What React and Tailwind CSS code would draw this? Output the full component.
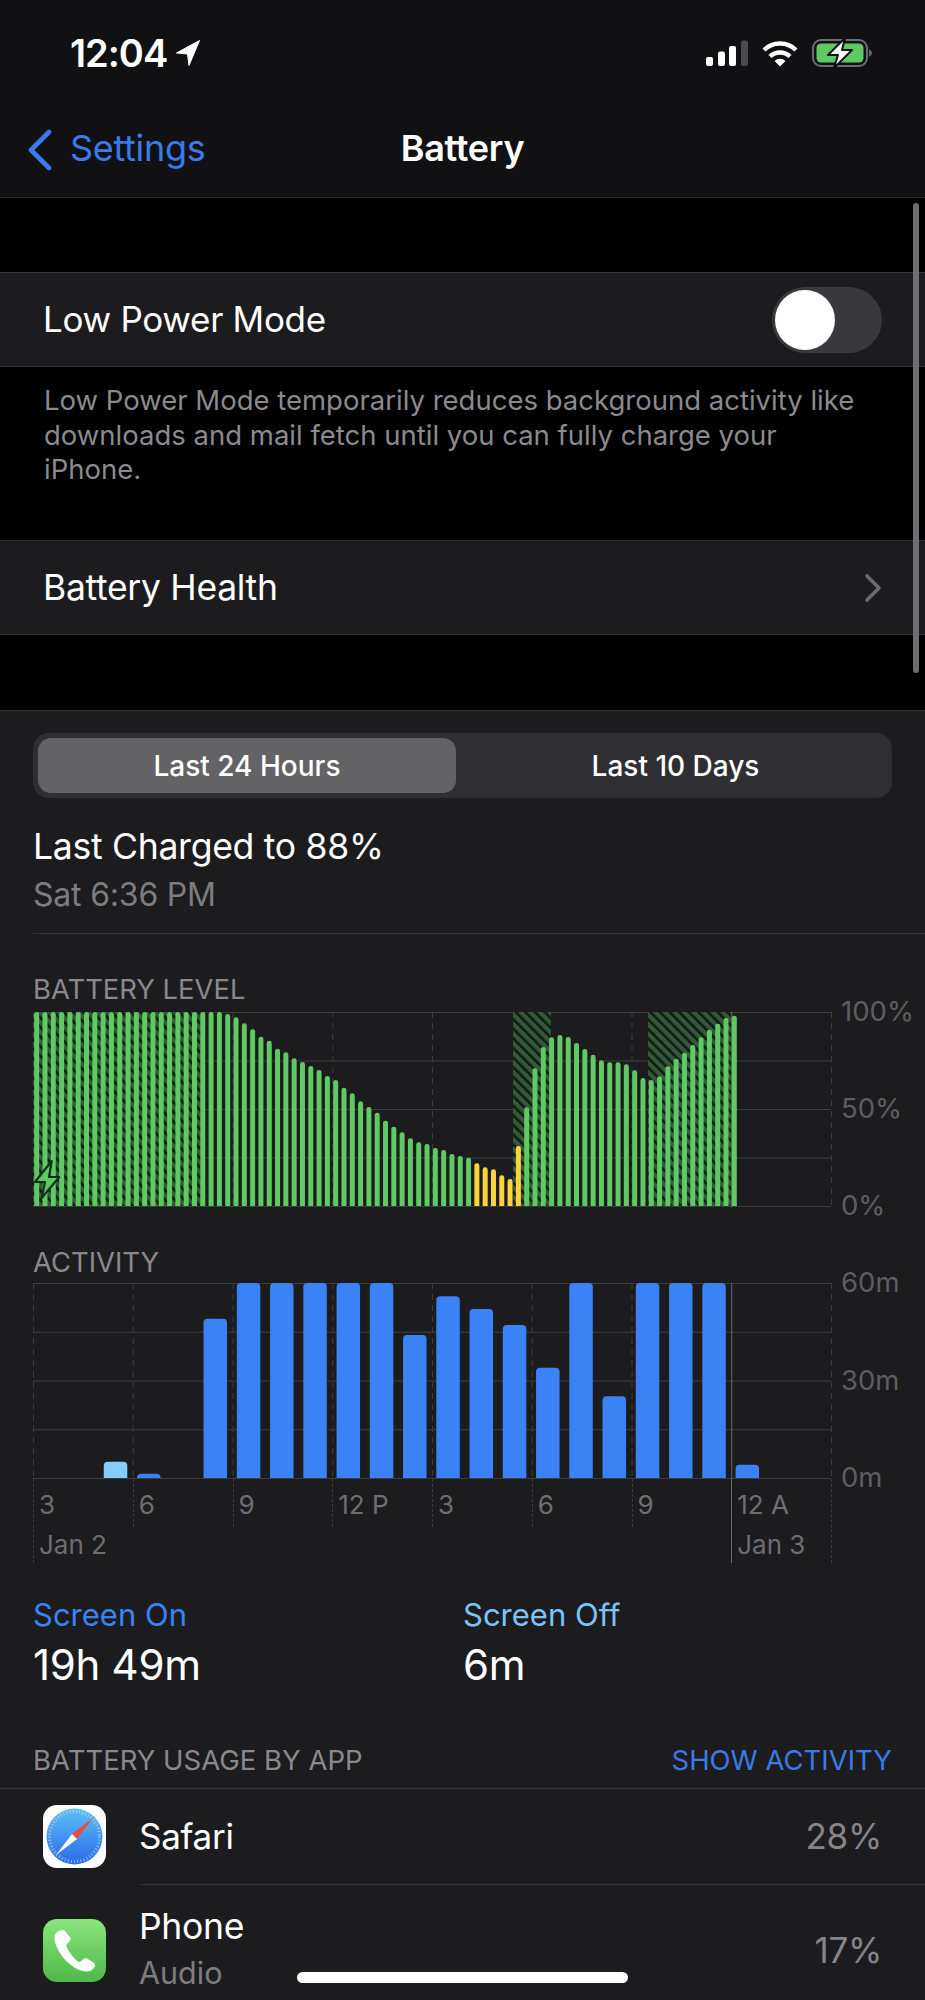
import React from "react";

const LEVEL_TOPS = [
  36, 36, 36, 36, 36, 36, 36, 36, 36, 36, 36, 36, 36, 36, 36, 36, 36, 36, 36, 36, 36, 36, 36,
  42, 52, 70, 88, 110, 122, 146, 157, 175, 186, 198, 210, 228, 240, 263, 280, 304, 321, 338,
  362, 380, 397, 415, 427, 432, 444, 450, 462, 468, 473, 490, 502, 508, 526, 537, 438, 322,
  205, 141, 112, 105, 111, 129, 147, 164, 181, 187, 187, 193, 211, 234, 240, 229, 199, 176,
  158, 135, 112, 89, 71, 54, 47,
];

const ACTIVITY = [
  { slot: 2, top: 726, light: true },
  { slot: 3, top: 762 },
  { slot: 5, top: 297 },
  { slot: 6, top: 190 },
  { slot: 7, top: 190 },
  { slot: 8, top: 190 },
  { slot: 9, top: 190 },
  { slot: 10, top: 190 },
  { slot: 11, top: 346 },
  { slot: 12, top: 230 },
  { slot: 13, top: 268 },
  { slot: 14, top: 316 },
  { slot: 15, top: 444 },
  { slot: 16, top: 190 },
  { slot: 17, top: 530 },
  { slot: 18, top: 190 },
  { slot: 19, top: 190 },
  { slot: 20, top: 190 },
  { slot: 21, top: 735 },
];

const COL = 99.75;
const VERTICALS = [0, 1, 2, 3, 4, 5, 6, 7, 8];

function roundTopBar(x, top, w, bottom, r) {
  return `M${x} ${bottom}V${top + r}Q${x} ${top} ${x + r} ${top}H${x + w - r}Q${x + w} ${top} ${x + w} ${top + r}V${bottom}Z`;
}

const Grid = ({ height }) => (
  <>
    {[0, 0.25, 0.5, 0.75, 1].map((f) => (
      <line key={f} x1="0" x2="798" y1={0.5 + f * (height - 1)} y2={0.5 + f * (height - 1)} stroke="#3c3c3f" strokeWidth="1" />
    ))}
    {VERTICALS.map((v) => (
      <line
        key={v}
        x1={v * COL + 0.5}
        x2={v * COL + 0.5}
        y1="0"
        y2={height}
        stroke={v === 7 ? "#6a6a6e" : "#3c3c3f"}
        strokeWidth="1"
        strokeDasharray={v === 7 ? undefined : "6 5"}
      />
    ))}
  </>
);

const BatteryChart = () => (
  <svg width="800" height="195" viewBox="0 0 800 195" className="block">
    <defs>
      <pattern id="hatch" width="6.8" height="6.8" patternUnits="userSpaceOnUse" patternTransform="rotate(-45)">
        <rect width="6.8" height="6.8" fill="#33593a" />
        <rect width="2.6" height="6.8" fill="#101c12" />
      </pattern>
      <clipPath id="plot">
        <rect x="0" y="0" width="800" height="194" />
      </clipPath>
    </defs>
    <Grid height={195} />
    <rect x="0" y="0" width="172" height="194" fill="url(#hatch)" />
    <rect x="480" y="0" width="38" height="194" fill="url(#hatch)" />
    <rect x="615" y="0" width="83" height="194" fill="url(#hatch)" />
    <g clipPath="url(#plot)">
      {LEVEL_TOPS.map((t, i) => {
        const x = 3.7 + 8.305 * i - 2.5;
        const top = (t - 36) / 3;
        const yellow = i >= 53 && i <= 58;
        return <path key={i} d={roundTopBar(x, top, 5, 194, 2.4)} fill={yellow ? "#fbd33f" : "#5fc963"} />;
      })}
    </g>
    <path d="M18.7 149 L2 170 L12 170 L8.7 186 L26.3 165 L16 165 Z" fill="#5fc963" stroke="#12301a" strokeWidth="2.2" strokeLinejoin="round" />
  </svg>
);

const ActivityChart = () => (
  <svg width="800" height="196" viewBox="0 0 800 196" className="block">
    <Grid height={196} />
    {ACTIVITY.map((b) => {
      const x = 4.3 + 33.25 * b.slot + 0;
      const top = (b.top - 190) / 3;
      return <path key={b.slot} d={roundTopBar(x, top, 23.5, 195, 4)} fill={b.light ? "#84cdfc" : "#3b82f6"} />;
    })}
  </svg>
);

const AXIS = [
  { label: "3", date: "Jan 2", tall: true },
  { label: "6" },
  { label: "9" },
  { label: "12 P" },
  { label: "3" },
  { label: "6" },
  { label: "9" },
  { label: "12 A", date: "Jan 3", tall: true, solid: true },
];

const AxisLabels = () => (
  <div className="flex w-[799px] h-[84px] border-r border-dashed border-[#3c3c3f] text-[26px] text-[#6e6e72]">
    {AXIS.map((a, i) => (
      <div key={i} className="relative w-[99.75px] h-[84px] pl-[6px]">
        <div
          className={
            a.solid
              ? "absolute left-0 top-0 h-[84px] border-l border-[#6a6a6e]"
              : a.tall
                ? "absolute left-0 top-0 h-[84px] border-l border-dashed border-[#3c3c3f]"
                : "absolute left-0 top-0 h-[48px] border-l border-dashed border-[#3c3c3f]"
          }
        />
        <div className="h-[52px] leading-[52px]">{a.label}</div>
        {a.date && <div className="h-[32px] leading-[28px]">{a.date}</div>}
      </div>
    ))}
  </div>
);

const AxisValues = ({ values, height }) => (
  <div className="flex flex-col justify-between text-[27.5px] text-[#5e5e62] ml-[8px]" style={{ height }}>
    {values.map((v) => (
      <div key={v} className="h-0 flex items-center">
        {v}
      </div>
    ))}
  </div>
);

const StatusIcons = () => (
  <div className="flex items-center gap-[14px]">
    <svg width="42" height="27" viewBox="0 0 42 27">
      <rect x="0" y="17" width="7" height="9" rx="2" fill="#fff" />
      <rect x="12" y="11.5" width="7" height="14.5" rx="2" fill="#fff" />
      <rect x="23" y="6" width="7" height="20" rx="2" fill="#fff" />
      <rect x="35" y="0.5" width="7" height="25.5" rx="2" fill="#4c4c4e" />
    </svg>
    <svg width="36" height="27" viewBox="0 0 36 27" fill="none" stroke="#fff" strokeWidth="4.4">
      <path d="M2 10 A23 23 0 0 1 34 10" />
      <path d="M8 16.5 A14.5 14.5 0 0 1 28 16.5" />
      <path d="M12.5 21 L18 26.5 L23.5 21 A8 8 0 0 0 12.5 21 Z" fill="#fff" stroke="none" />
    </svg>
    <svg width="60" height="30" viewBox="0 0 60 30">
      <rect x="1" y="2" width="54" height="26" rx="8" fill="none" stroke="#6d6d6f" strokeWidth="2" />
      <rect x="4.5" y="5.5" width="47" height="19" rx="4.5" fill="#5fc963" />
      <path d="M57 11 Q60 13 60 15 Q60 17 57 19 Z" fill="#6d6d6f" />
      <path d="M33 0 L16 17 L26 17 L22 30 L40 12 L30 12 Z" fill="#fff" stroke="#111113" strokeWidth="2" strokeLinejoin="round" />
    </svg>
  </div>
);

const SafariIcon = () => (
  <svg width="63" height="63" viewBox="0 0 63 63" className="shrink-0">
    <defs>
      <linearGradient id="safariBlue" x1="0" y1="0" x2="0" y2="1">
        <stop offset="0" stopColor="#5cc0f6" />
        <stop offset="1" stopColor="#2b6ae8" />
      </linearGradient>
    </defs>
    <rect width="63" height="63" rx="14" fill="#fff" />
    <circle cx="31.5" cy="31.5" r="28" fill="url(#safariBlue)" />
    <circle cx="31.5" cy="31.5" r="25" fill="none" stroke="#d5e8fb" strokeWidth="3" strokeDasharray="1 2.2" opacity="0.6" />
    <path d="M50 13 L29 29 L34 34 Z" fill="#ee4c3c" />
    <path d="M13 50 L29 29 L34 34 Z" fill="#fff" />
  </svg>
);

const PhoneIcon = () => (
  <svg width="63" height="63" viewBox="0 0 63 63" className="shrink-0">
    <defs>
      <linearGradient id="phoneGreen" x1="0" y1="0" x2="0" y2="1">
        <stop offset="0" stopColor="#8ae57e" />
        <stop offset="1" stopColor="#4fb848" />
      </linearGradient>
    </defs>
    <rect width="63" height="63" rx="14" fill="url(#phoneGreen)" />
    <path
      d="M17 11.5 C14 12.5 11 15 11.5 20 C13 33 27 50 42 52.5 C47 53 50.5 50.5 52 47 C52.5 45.5 52 44.5 50.5 43.5 L44 39.5 C42.5 38.7 41.3 39 40.2 40.2 L37.5 42.5 C36.5 43.2 35.5 43 34.5 42.2 C30 38.5 25.5 32.5 23.5 27.5 C23.2 26.3 23.5 25.3 24.5 24.5 L26.5 22.5 C27.7 21.3 27.8 20 27.2 18.7 L22.5 12.5 C21 11 19 10.8 17 11.5 Z"
      fill="#fff"
    />
  </svg>
);

const App = () => {
  return (
    <div
      className="relative w-[925px] h-[2000px] overflow-hidden bg-black text-white"
      style={{ fontFamily: "Inter, 'Noto Sans', sans-serif" }}
    >
      <header className="h-[198px] bg-[#111113] border-b border-[#28282a]">
        <div className="h-[106px] flex items-center justify-between pl-[70px] pr-[53px]">
          <div className="flex items-center gap-[9px]">
            <span className="text-[38px] font-semibold tracking-[-1px]">12:04</span>
            <svg width="24" height="26" viewBox="0 0 24 26">
              <path d="M23.5 0.5 L0.5 13 L11.5 14 L13 25.5 Z" fill="#fff" stroke="#fff" strokeLinejoin="round" />
            </svg>
          </div>
          <StatusIcons />
        </div>
        <div className="relative h-[91px] flex items-center justify-center pb-[8px]">
          <div className="absolute left-[28px] top-[23px] flex items-center gap-[18px] h-[42px]">
            <svg width="24" height="42" viewBox="0 0 24 42" fill="none" stroke="#3a7bea" strokeWidth="4.6" strokeLinecap="round" strokeLinejoin="round">
              <path d="M21 3 L3 21 L21 39" />
            </svg>
            <span className="text-[36px] text-[#3a7bea] tracking-[-0.3px] -translate-y-[2px]">Settings</span>
          </div>
          <span className="text-[36px] font-semibold tracking-[-0.3px]">Battery</span>
        </div>
      </header>

      <div className="h-[74px]" />
      <div className="h-[95px] flex items-center justify-between pl-[43px] pr-[43px] bg-[#1c1c1e] border-y border-[#333336]">
        <span className="text-[35px] tracking-[-0.3px]">Low Power Mode</span>
        <div className="w-[110px] h-[66px] rounded-full bg-[#39393d] p-[3px]">
          <div className="w-[60px] h-[60px] rounded-full bg-white" />
        </div>
      </div>
      <p className="h-[173px] w-[875px] pl-[44px] pr-[20px] pt-[16px] text-[27.5px] leading-[34.6px] text-[#8a8a8f]">
        Low Power Mode temporarily reduces background activity like downloads and mail fetch until you can fully charge your iPhone.
      </p>
      <div className="h-[95px] flex items-center justify-between pl-[43px] pr-[43px] bg-[#1c1c1e] border-y border-[#333336]">
        <span className="text-[35.5px] tracking-[-0.3px]">Battery Health</span>
        <svg width="18" height="30" viewBox="0 0 18 30" fill="none" stroke="#6c6c70" strokeWidth="3.6" strokeLinecap="round" strokeLinejoin="round">
          <path d="M3 3 L15 15 L3 27" />
        </svg>
      </div>
      <div className="h-[75px]" />

      <section className="bg-[#1c1c1e] border-t border-[#333336] h-[1290px] pt-[22px]">
        <div className="mx-[33px] w-[859px] h-[65px] rounded-[16px] bg-[#2f2f33] p-[5px] flex items-center text-[28px] font-medium">
          <div className="w-[418px] h-[55px] rounded-[13px] bg-[#636366] flex items-center justify-center">Last 24 Hours</div>
          <div className="flex-1 flex items-center justify-center pl-[8px]">Last 10 Days</div>
        </div>

        <div className="ml-[33px] mt-[24px] h-[50px] leading-[50px] text-[35.6px] tracking-[-0.3px]">Last Charged to 88%</div>
        <div className="ml-[33px] mt-[1px] h-[44px] leading-[44px] text-[32px] text-[#7d7d81] tracking-[-0.2px]">Sat 6:36 PM</div>
        <div className="ml-[33px] mt-[16px] border-t border-[#333336]" />

        <div className="ml-[33px] mt-[36px] h-[38px] leading-[38px] text-[27.4px] text-[#8a8a8e]">BATTERY LEVEL</div>
        <div className="ml-[33px] mt-[4px] flex">
          <BatteryChart />
          <AxisValues values={["100%", "50%", "0%"]} height={194} />
        </div>

        <div className="ml-[33px] mt-[36px] h-[38px] leading-[38px] text-[27.4px] text-[#8a8a8e]">ACTIVITY</div>
        <div className="ml-[33px] mt-[2px] flex">
          <ActivityChart />
          <AxisValues values={["60m", "30m", "0m"]} height={195} />
        </div>
        <div className="ml-[33px]">
          <AxisLabels />
        </div>

        <div className="ml-[33px] mt-[30px] flex">
          <div className="w-[430px]">
            <div className="h-[44px] leading-[44px] text-[31px] text-[#3b82f6]">Screen On</div>
            <div className="mt-[3px] h-[50px] leading-[50px] text-[42px] tracking-[-0.3px]">19h 49m</div>
          </div>
          <div>
            <div className="h-[44px] leading-[44px] text-[31px] text-[#7cc4f8]">Screen Off</div>
            <div className="mt-[3px] h-[50px] leading-[50px] text-[42px] tracking-[-0.3px]">6m</div>
          </div>
        </div>

        <div className="mt-[48px] pl-[33px] pr-[33px] pb-[4px] h-[46px] flex justify-between items-center text-[27.5px] box-content">
          <span className="text-[#8a8a8e]">BATTERY USAGE BY APP</span>
          <span className="text-[#3a7bea]">SHOW ACTIVITY</span>
        </div>
        <div className="border-t border-[#333336]">
          <div className="h-[95px] flex items-center pl-[43px] pr-[43px]">
            <SafariIcon />
            <div className="ml-[33px] flex-1 text-[35px] tracking-[-0.3px]">Safari</div>
            <div className="text-[35px] text-[#85858a] tracking-[-0.3px]">28%</div>
          </div>
          <div className="ml-[140px] border-t border-[#333336]" />
          <div className="h-[130px] flex items-center pl-[43px] pr-[43px]">
            <PhoneIcon />
            <div className="ml-[33px] flex-1">
              <div className="h-[46px] leading-[46px] text-[35.5px] tracking-[-0.3px]">Phone</div>
              <div className="h-[46px] leading-[46px] text-[30.5px] text-[#7d7d81]">Audio</div>
            </div>
            <div className="text-[35px] text-[#85858a] tracking-[-0.3px]">17%</div>
          </div>
        </div>
      </section>

      {/* scroll indicator and home bar sit over the list */}
      <div className="absolute left-[913px] top-[203px] w-[6px] h-[470px] rounded-full bg-[#6e6e72]" />
      <div className="absolute left-[297px] top-[1972px] w-[331px] h-[11px] rounded-full bg-white" />
    </div>
  );
};

export default App;
